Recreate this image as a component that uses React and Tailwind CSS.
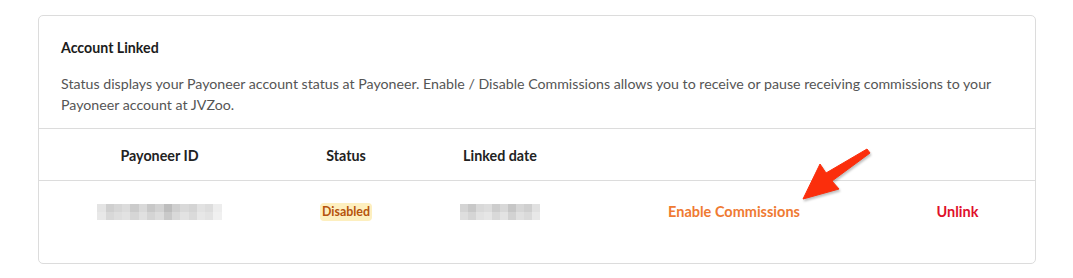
import React from "react";

const idBlocks = [
  ["#e4e4e4", "#cfcfcf", "#d6d6d6", "#dcdcdc", "#cbcbcb", "#d9d9d9", "#c8c8c8", "#d2d2d2", "#bdbdbd", "#cfcfcf", "#d9d9d9", "#d4d4d4", "#e2e2e2", "#dddddd", "#ededed"],
  ["#e8e8e8", "#d8d8d8", "#dedede", "#e2e2e2", "#d6d6d6", "#e0e0e0", "#d4d4d4", "#dcdcdc", "#c9c9c9", "#d9d9d9", "#e2e2e2", "#dadada", "#e7e7e7", "#e3e3e3", "#f0f0f0"],
];
const dateBlocks = [
  ["#d4d4d4", "#c8c8c8", "#d9d9d9", "#dddddd", "#cdcdcd", "#d8d8d8", "#c6c6c6", "#d6d6d6", "#cfcfcf", "#e1e1e1"],
  ["#dedede", "#d5d5d5", "#e2e2e2", "#e6e6e6", "#d9d9d9", "#e3e3e3", "#d2d2d2", "#e0e0e0", "#dadada", "#e8e8e8"],
];

function Blur({ rows, cell }) {
  return (
    <div className="inline-flex flex-col">
      {rows.map((r, i) => (
        <div key={i} className="flex">
          {r.map((c, j) => (
            <div key={j} style={{ backgroundColor: c, width: cell, height: 8 }} />
          ))}
        </div>
      ))}
    </div>
  );
}

export default function App() {
  return (
    <div className="w-[1073px] h-[278px] bg-white pt-[15px] pl-[38px] font-['Lato',sans-serif]">
      <div className="relative w-[998px] border border-[#dcdcdc] rounded-[5px]">
        <div className="pt-[22px] pl-[22px] pr-[22px] pb-[13px]">
          <div className="text-[14.2px] leading-[20px] font-bold text-[#1c1c1c]">Account Linked</div>
          <p className="mt-[15px] text-[14.2px] leading-[21px] text-[#555555]">
            Status displays your Payoneer account status at Payoneer. Enable / Disable Commissions allows you to receive or pause receiving commissions to your Payoneer account at JVZoo.
          </p>
        </div>
        <div className="grid grid-cols-[241px_132px_176px_292px_155px] border-t border-b border-[#dcdcdc] pt-[17px] pb-[14px] text-[14.3px] leading-[20px] font-bold text-[#222222] text-center">
          <div>Payoneer ID</div>
          <div>Status</div>
          <div>Linked date</div>
          <div></div>
          <div></div>
        </div>
        <div className="grid grid-cols-[241px_132px_176px_292px_155px] items-center pt-[21px] pb-[41px] text-[14.5px] leading-[20px] font-bold text-center">
          <div className="flex justify-center">
            <Blur rows={idBlocks} cell={8.3} />
          </div>
          <div className="flex justify-center">
            <span className="bg-[#fdefbf] text-[#b5520c] text-[12.4px] leading-[18px] px-[2px] rounded-[4px]">Disabled</span>
          </div>
          <div className="flex justify-center">
            <Blur rows={dateBlocks} cell={8} />
          </div>
          <div className="text-[#ef7a32]">Enable Commissions</div>
          <div className="text-[#e0112b]">Unlink</div>
        </div>
        <svg
          className="absolute left-[762px] top-[130px] drop-shadow-[1px_2px_1px_rgba(0,0,0,0.25)]"
          width="75"
          height="60"
          viewBox="800 145 75 60"
        >
          <polygon
            points="802,198 819,163 825,172 866,148 869,152 831,180 838,188"
            fill="#fb2e0c"
            strokeLinejoin="round"
            stroke="#fb2e0c"
            strokeWidth="1"
          />
        </svg>
      </div>
    </div>
  );
}
